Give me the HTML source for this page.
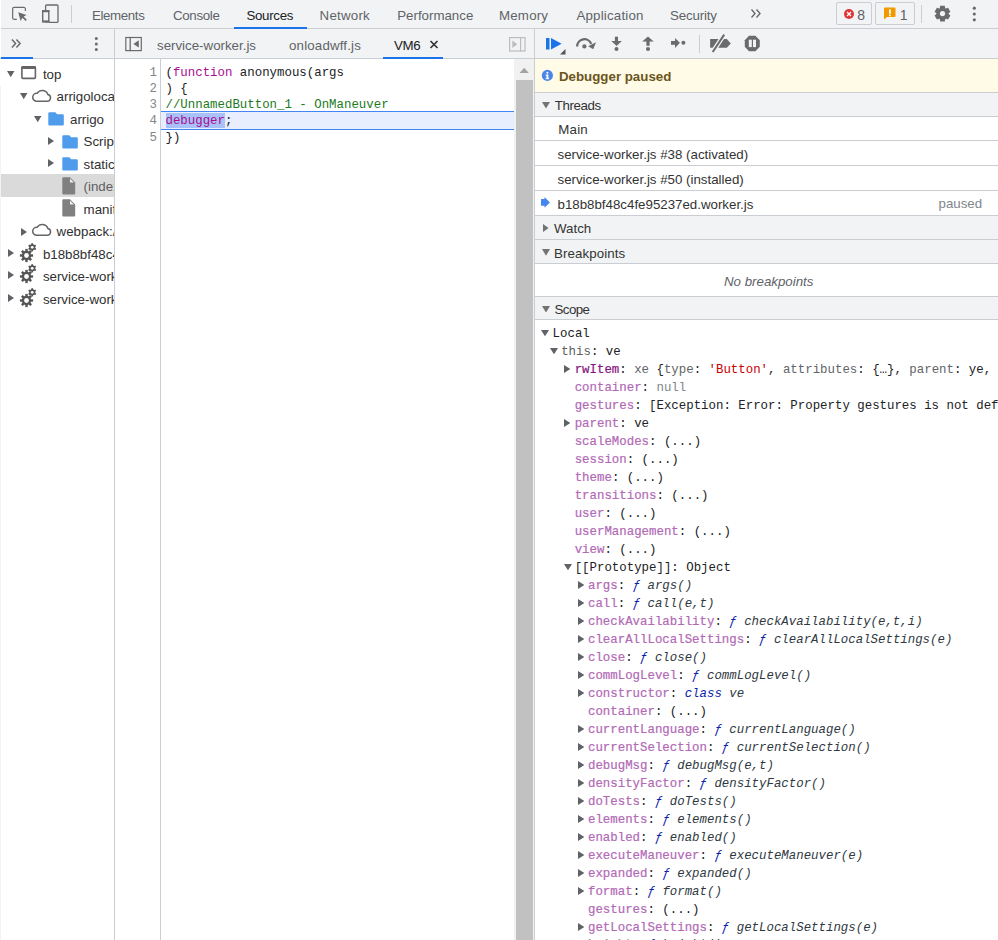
<!DOCTYPE html><html><head><meta charset="utf-8"><style>html,body{margin:0;padding:0;}body{width:998px;height:940px;overflow:hidden;position:relative;background:#fff;}.t{position:absolute;white-space:pre;line-height:normal;}.r{position:absolute;display:block;}</style></head><body>
<div class="r" style="left:0px;top:0px;width:998px;height:28px;background:#f1f3f4;"></div>
<div class="r" style="left:0px;top:28px;width:998px;height:1px;background:#cacdd1;"></div>
<svg class="r" style="left:8px;top:2px;" width="24" height="24" viewBox="0 0 24 24"><path d="M8.8 17.35H6.15a1.5 1.5 0 0 1-1.5-1.5V6.9a1.5 1.5 0 0 1 1.5-1.5H15.9a1.5 1.5 0 0 1 1.5 1.5V8.9" fill="none" stroke="#6b6b6b" stroke-width="1.2"/><path d="M10.2 10.2L18.6 13L15.6 14.6L18.8 17.8L17.6 19L14.4 15.8L12.6 18.9Z" fill="#6b6b6b"/></svg>
<svg class="r" style="left:38px;top:2px;" width="24" height="24" viewBox="0 0 24 24"><rect x="7.6" y="3" width="12.4" height="17.4" rx="1" fill="none" stroke="#6b6b6b" stroke-width="1.3"/><rect x="4.1" y="8.2" width="7.3" height="12.2" rx="1" fill="#f1f3f4"/><rect x="4.7" y="8.9" width="6.1" height="10.8" fill="none" stroke="#6b6b6b" stroke-width="1.4"/><rect x="4.1" y="8.2" width="7.3" height="2" fill="#6b6b6b"/><rect x="4.1" y="18.4" width="7.3" height="2" fill="#6b6b6b"/></svg>
<div class="r" style="left:71px;top:5px;width:1px;height:18px;background:#cacdd1;"></div>
<div class="t" style="left:92px;top:8px;font-family:'Liberation Sans', sans-serif;font-size:13.3px;color:#5f6368;font-weight:normal;font-style:normal;letter-spacing:-0.37px;">Elements</div>
<div class="t" style="left:173px;top:8px;font-family:'Liberation Sans', sans-serif;font-size:13.3px;color:#5f6368;font-weight:normal;font-style:normal;letter-spacing:-0.33px;">Console</div>
<div class="t" style="left:246.4px;top:8px;font-family:'Liberation Sans', sans-serif;font-size:13.3px;color:#202124;font-weight:normal;font-style:normal;letter-spacing:-0.3px;">Sources</div>
<div class="t" style="left:319.6px;top:8px;font-family:'Liberation Sans', sans-serif;font-size:13.3px;color:#5f6368;font-weight:normal;font-style:normal;letter-spacing:0.23px;">Network</div>
<div class="t" style="left:397.2px;top:8px;font-family:'Liberation Sans', sans-serif;font-size:13.3px;color:#5f6368;font-weight:normal;font-style:normal;letter-spacing:0px;">Performance</div>
<div class="t" style="left:499px;top:8px;font-family:'Liberation Sans', sans-serif;font-size:13.3px;color:#5f6368;font-weight:normal;font-style:normal;letter-spacing:0.2px;">Memory</div>
<div class="t" style="left:576.4px;top:8px;font-family:'Liberation Sans', sans-serif;font-size:13.3px;color:#5f6368;font-weight:normal;font-style:normal;letter-spacing:0.2px;">Application</div>
<div class="t" style="left:670px;top:8px;font-family:'Liberation Sans', sans-serif;font-size:13.3px;color:#5f6368;font-weight:normal;font-style:normal;letter-spacing:-0.16px;">Security</div>
<div class="r" style="left:234px;top:27px;width:73px;height:2px;background:#1a73e8;"></div>
<svg class="r" style="left:750px;top:8px;" width="12" height="11" viewBox="0 0 12 11"><path d="M1.5 1.5L5 5.5L1.5 9.5M6.5 1.5L10 5.5L6.5 9.5" fill="none" stroke="#6b6b6b" stroke-width="1.4"/></svg>
<div class="r" style="left:836px;top:2px;width:34px;height:21px;border:1px solid #cacdd1;border-radius:2px;background:#f1f3f4"></div>
<svg class="r" style="left:843px;top:8px;" width="12" height="12" viewBox="0 0 12 12"><circle cx="6" cy="6" r="5" fill="#e03535"/><path d="M4 4L8 8M8 4L4 8" stroke="#fff" stroke-width="1.3"/></svg>
<div class="t" style="left:857.3px;top:7.300000000000001px;font-family:'Liberation Sans', sans-serif;font-size:14px;color:#5f6368;font-weight:normal;font-style:normal;">8</div>
<div class="r" style="left:875px;top:2px;width:38px;height:21px;border:1px solid #cacdd1;border-radius:2px;background:#f1f3f4"></div>
<svg class="r" style="left:883px;top:7px;" width="13" height="13" viewBox="0 0 13 13"><path d="M1 1.5a1 1 0 0 1 1-1H11.5a1 1 0 0 1 1 1V9a1 1 0 0 1-1 1H4L1 12.5Z" fill="#f29900"/><rect x="6" y="2.4" width="1.8" height="4.4" fill="#fff"/><rect x="6" y="7.6" width="1.8" height="1.6" fill="#fff"/></svg>
<div class="t" style="left:899.8px;top:7.300000000000001px;font-family:'Liberation Sans', sans-serif;font-size:14px;color:#5f6368;font-weight:normal;font-style:normal;">1</div>
<div class="r" style="left:921px;top:5px;width:1px;height:18px;background:#cacdd1;"></div>
<svg class="r" style="left:933px;top:4px;" width="19" height="19" viewBox="0 0 19 19"><g transform="translate(9.5,9.6)" fill="#6b6b6b"><path d="M-2.3 -7.8H2.3L3 -4H-3Z" transform="rotate(0)"/><path d="M-2.3 -7.8H2.3L3 -4H-3Z" transform="rotate(60)"/><path d="M-2.3 -7.8H2.3L3 -4H-3Z" transform="rotate(120)"/><path d="M-2.3 -7.8H2.3L3 -4H-3Z" transform="rotate(180)"/><path d="M-2.3 -7.8H2.3L3 -4H-3Z" transform="rotate(240)"/><path d="M-2.3 -7.8H2.3L3 -4H-3Z" transform="rotate(300)"/><circle r="5.9"/><circle r="2.6" fill="#f1f3f4"/></g></svg>
<svg class="r" style="left:971px;top:5px;" width="6" height="18" viewBox="0 0 6 18"><circle cx="3.3" cy="3.2" r="1.6" fill="#6b6b6b"/><circle cx="3.3" cy="9" r="1.6" fill="#6b6b6b"/><circle cx="3.3" cy="14.8" r="1.6" fill="#6b6b6b"/></svg>
<div class="r" style="left:0px;top:29px;width:998px;height:29px;background:#f1f3f4;"></div>
<div class="r" style="left:0px;top:58px;width:998px;height:1px;background:#cacdd1;"></div>
<div class="r" style="left:0px;top:0px;width:1px;height:58px;background:#ffffff;"></div>
<div class="r" style="left:114px;top:29px;width:1px;height:911px;background:#cacdd1;"></div>
<div class="r" style="left:534px;top:29px;width:1px;height:911px;background:#cacdd1;"></div>
<svg class="r" style="left:10px;top:38px;" width="12" height="11" viewBox="0 0 12 11"><path d="M1.9 1.4L5.6 5.45L1.9 9.5M6.4 1.4L10.1 5.45L6.4 9.5" fill="none" stroke="#6b6b6b" stroke-width="1.5"/></svg>
<svg class="r" style="left:93px;top:36px;" width="6" height="16" viewBox="0 0 6 16"><circle cx="3.3" cy="2.5" r="1.5" fill="#6b6b6b"/><circle cx="3.3" cy="8" r="1.5" fill="#6b6b6b"/><circle cx="3.3" cy="13.5" r="1.5" fill="#6b6b6b"/></svg>
<div class="r" style="left:1px;top:57px;width:32px;height:2px;background:#1a73e8;"></div>
<svg class="r" style="left:124px;top:36px;" width="20" height="17" viewBox="0 0 20 17"><rect x="1.8" y="1.5" width="15.5" height="13.1" fill="none" stroke="#6b6b6b" stroke-width="1.2"/><rect x="5.55" y="0.9" width="1.3" height="14.3" fill="#6b6b6b"/><path d="M14.8 4.3L9.4 7.9L14.8 11.5Z" fill="#6b6b6b"/></svg>
<div class="t" style="left:157px;top:38px;font-family:'Liberation Sans', sans-serif;font-size:13.3px;color:#5f6368;font-weight:normal;font-style:normal;">service-worker.js</div>
<div class="t" style="left:289px;top:38px;font-family:'Liberation Sans', sans-serif;font-size:13.3px;color:#5f6368;font-weight:normal;font-style:normal;letter-spacing:0.17px;">onloadwff.js</div>
<div class="t" style="left:394px;top:38px;font-family:'Liberation Sans', sans-serif;font-size:13.3px;color:#202124;font-weight:normal;font-style:normal;letter-spacing:-0.3px;">VM6</div>
<svg class="r" style="left:429px;top:40px;" width="10" height="9" viewBox="0 0 10 9"><path d="M1.5 1L8.5 8M8.5 1L1.5 8" stroke="#333" stroke-width="1.7"/></svg>
<div class="r" style="left:383px;top:57px;width:60px;height:2px;background:#1a73e8;"></div>
<svg class="r" style="left:508px;top:36px;" width="19" height="17" viewBox="0 0 19 17"><rect x="1.6" y="1.6" width="15.4" height="13.4" fill="none" stroke="#bdbdbd" stroke-width="1.2"/><rect x="12" y="1" width="1.2" height="14.6" fill="#bdbdbd"/><path d="M4.3 4.6L9.4 8.3L4.3 12Z" fill="#bdbdbd"/></svg>
<svg class="r" style="left:544px;top:36px;" width="24" height="20" viewBox="0 0 24 20"><rect x="2" y="2" width="3.5" height="11.5" fill="#1a73e8"/><path d="M7 2L17.6 7.75L7 13.5Z" fill="#1a73e8"/><path d="M21.5 13V18.6H16Z" fill="#555"/></svg>
<svg class="r" style="left:570px;top:30px;" width="30" height="26" viewBox="0 0 30 26"><path d="M7.1 16.6A7.3 7.3 0 0 1 21.2 13.9" fill="none" stroke="#6b6b6b" stroke-width="2.3"/><path d="M18.2 16.2L26 12.3L23.2 19.2Z" fill="#6b6b6b"/><circle cx="14.4" cy="16.4" r="2.1" fill="#6b6b6b"/></svg>
<svg class="r" style="left:604px;top:30px;" width="56" height="26" viewBox="0 0 56 26"><g fill="#6b6b6b"><rect x="10.9" y="6.7" width="3.1" height="5"/><path d="M7.3 11H17.9L12.6 15.9Z"/><circle cx="12.5" cy="19.1" r="2"/><path d="M38.2 11.5H49.7L44 6.5Z"/><rect x="42.4" y="11" width="3.2" height="4.8"/><circle cx="44" cy="19.1" r="2"/></g></svg>
<svg class="r" style="left:664px;top:34px;" width="28" height="20" viewBox="0 0 28 20"><g fill="#6b6b6b"><rect x="7" y="7" width="4.4" height="3.8"/><path d="M11 4.1L15.9 8.85L11 13.9Z"/><circle cx="19.4" cy="8.75" r="2"/></g></svg>
<div class="r" style="left:699px;top:35px;width:1px;height:18px;background:#cacdd1;"></div>
<svg class="r" style="left:708px;top:33px;" width="24" height="21" viewBox="0 0 24 21"><path d="M2.1 6.1H18.8L22.8 10.45L18.8 14.8H2.1Z" fill="#6b6b6b"/><path d="M4.7 19L16.2 1.6" stroke="#f1f3f4" stroke-width="4.6"/><path d="M4.7 19L16.2 1.6" stroke="#6b6b6b" stroke-width="2"/></svg>
<svg class="r" style="left:744px;top:35px;" width="17" height="17" viewBox="0 0 17 17"><path d="M5 0.8H11.4L15.8 5.2V11.8L11.4 16.2H5L0.8 11.8V5.2Z" fill="#6b6b6b"/><rect x="4.8" y="4.7" width="3" height="7.4" fill="#f1f3f4"/><rect x="9" y="4.7" width="3" height="7.4" fill="#f1f3f4"/></svg>
<div style="position:absolute;left:0;top:0;width:998px;height:940px;clip-path:inset(59px 884px 0 0)">
<div class="r" style="left:0px;top:59px;width:1px;height:27px;background:#ffffff;"></div>
<div class="r" style="left:0px;top:86px;width:1px;height:854px;background:#f3f3f3;"></div>
<div class="r" style="left:1px;top:174px;width:113px;height:23px;background:#dadada;"></div>
<svg class="r" style="left:7px;top:70.5px;" width="7.5" height="6.2" viewBox="0 0 7.5 6.2"><path d="M0 0H7.5L3.75 6.2Z" fill="#5f6368"/></svg>
<svg class="r" style="left:21px;top:65.5px;" width="16" height="14" viewBox="0 0 16 14"><rect x="0.9" y="0.9" width="13.5" height="11.5" rx="1" fill="none" stroke="#666" stroke-width="1.6"/><rect x="0.3" y="0.3" width="14.7" height="2.8" rx="0.8" fill="#666"/></svg>
<div class="t" style="left:42.9px;top:67px;font-family:'Liberation Sans', sans-serif;font-size:13.3px;color:#303030;font-weight:normal;font-style:normal;">top</div>
<svg class="r" style="left:20.3px;top:93px;" width="7.5" height="6.2" viewBox="0 0 7.5 6.2"><path d="M0 0H7.5L3.75 6.2Z" fill="#5f6368"/></svg>
<svg class="r" style="left:31px;top:88px;" width="21" height="15" viewBox="0 0 21 15"><path d="M5.3 13.35H16.2A3.45 3.45 0 0 0 16.9 6.55A5.9 5.9 0 0 0 6.3 5.2A4.1 4.1 0 0 0 5.3 13.35Z" fill="none" stroke="#666" stroke-width="1.5"/></svg>
<div class="t" style="left:56.6px;top:89px;font-family:'Liberation Sans', sans-serif;font-size:13.3px;color:#303030;font-weight:normal;font-style:normal;">arrigolocal</div>
<svg class="r" style="left:34px;top:115.5px;" width="7.5" height="6.2" viewBox="0 0 7.5 6.2"><path d="M0 0H7.5L3.75 6.2Z" fill="#5f6368"/></svg>
<svg class="r" style="left:47.7px;top:111.8px;" width="17" height="14" viewBox="0 0 17 14"><path d="M0.3 1.3A1 1 0 0 1 1.3 0.3H7.3L9.1 2.3H14.8A1 1 0 0 1 15.8 3.3V12.6A1 1 0 0 1 14.8 13.6H1.3A1 1 0 0 1 0.3 12.6Z" fill="#4f9cec"/></svg>
<div class="t" style="left:70px;top:112px;font-family:'Liberation Sans', sans-serif;font-size:13.3px;color:#303030;font-weight:normal;font-style:normal;">arrigo</div>
<svg class="r" style="left:48px;top:136.5px;" width="6.2" height="8" viewBox="0 0 6.2 8"><path d="M0 0L6.2 4.0L0 8Z" fill="#5f6368"/></svg>
<svg class="r" style="left:61.6px;top:134.6px;" width="17" height="14" viewBox="0 0 17 14"><path d="M0.3 1.3A1 1 0 0 1 1.3 0.3H7.3L9.1 2.3H14.8A1 1 0 0 1 15.8 3.3V12.6A1 1 0 0 1 14.8 13.6H1.3A1 1 0 0 1 0.3 12.6Z" fill="#4f9cec"/></svg>
<div class="t" style="left:83.6px;top:133.9px;font-family:'Liberation Sans', sans-serif;font-size:13.3px;color:#303030;font-weight:normal;font-style:normal;">Scripts</div>
<svg class="r" style="left:48px;top:159px;" width="6.2" height="8" viewBox="0 0 6.2 8"><path d="M0 0L6.2 4.0L0 8Z" fill="#5f6368"/></svg>
<svg class="r" style="left:61.6px;top:157.1px;" width="17" height="14" viewBox="0 0 17 14"><path d="M0.3 1.3A1 1 0 0 1 1.3 0.3H7.3L9.1 2.3H14.8A1 1 0 0 1 15.8 3.3V12.6A1 1 0 0 1 14.8 13.6H1.3A1 1 0 0 1 0.3 12.6Z" fill="#4f9cec"/></svg>
<div class="t" style="left:83.6px;top:157px;font-family:'Liberation Sans', sans-serif;font-size:13.3px;color:#303030;font-weight:normal;font-style:normal;">static</div>
<svg class="r" style="left:61.7px;top:176.5px;" width="14" height="18" viewBox="0 0 14 18"><path d="M0.3 1.3A1 1 0 0 1 1.3 0.3H8L13.2 5.5V16.5A1 1 0 0 1 12.2 17.5H1.3A1 1 0 0 1 0.3 16.5Z" fill="#808080"/><path d="M8 1.6L11.9 5.5H8Z" fill="#f0f0f0"/></svg>
<div class="t" style="left:83.6px;top:179px;font-family:'Liberation Sans', sans-serif;font-size:13.3px;color:#606060;font-weight:normal;font-style:normal;">(index)</div>
<svg class="r" style="left:61.7px;top:198.7px;" width="14" height="18" viewBox="0 0 14 18"><path d="M0.3 1.3A1 1 0 0 1 1.3 0.3H8L13.2 5.5V16.5A1 1 0 0 1 12.2 17.5H1.3A1 1 0 0 1 0.3 16.5Z" fill="#808080"/><path d="M8 1.6L11.9 5.5H8Z" fill="#f0f0f0"/></svg>
<div class="t" style="left:83.6px;top:202px;font-family:'Liberation Sans', sans-serif;font-size:13.3px;color:#303030;font-weight:normal;font-style:normal;">manifest.json</div>
<svg class="r" style="left:20.5px;top:227.5px;" width="6.2" height="8" viewBox="0 0 6.2 8"><path d="M0 0L6.2 4.0L0 8Z" fill="#5f6368"/></svg>
<svg class="r" style="left:31px;top:221.5px;" width="21" height="15" viewBox="0 0 21 15"><path d="M5.3 13.35H16.2A3.45 3.45 0 0 0 16.9 6.55A5.9 5.9 0 0 0 6.3 5.2A4.1 4.1 0 0 0 5.3 13.35Z" fill="none" stroke="#666" stroke-width="1.5"/></svg>
<div class="t" style="left:56.6px;top:223.7px;font-family:'Liberation Sans', sans-serif;font-size:13.3px;color:#303030;font-weight:normal;font-style:normal;">webpack://</div>
<svg class="r" style="left:8px;top:249px;" width="6" height="8" viewBox="0 0 6 8"><path d="M0 0L6 4.0L0 8Z" fill="#5f6368"/></svg>
<svg class="r" style="left:18.8px;top:242.5px;" width="22" height="20" viewBox="0 0 22 20"><g fill="#555"><g transform="translate(7.5,12.5)"><rect x="-1.2" y="-6.6" width="2.4" height="3" transform="rotate(0)"/><rect x="-1.2" y="-6.6" width="2.4" height="3" transform="rotate(45)"/><rect x="-1.2" y="-6.6" width="2.4" height="3" transform="rotate(90)"/><rect x="-1.2" y="-6.6" width="2.4" height="3" transform="rotate(135)"/><rect x="-1.2" y="-6.6" width="2.4" height="3" transform="rotate(180)"/><rect x="-1.2" y="-6.6" width="2.4" height="3" transform="rotate(225)"/><rect x="-1.2" y="-6.6" width="2.4" height="3" transform="rotate(270)"/><rect x="-1.2" y="-6.6" width="2.4" height="3" transform="rotate(315)"/><circle r="4.7"/><circle r="2.4" fill="#fff"/></g><g transform="translate(13.2,4.3)"><rect x="-0.9" y="-4.1" width="1.8" height="2.2" transform="rotate(0)"/><rect x="-0.9" y="-4.1" width="1.8" height="2.2" transform="rotate(60)"/><rect x="-0.9" y="-4.1" width="1.8" height="2.2" transform="rotate(120)"/><rect x="-0.9" y="-4.1" width="1.8" height="2.2" transform="rotate(180)"/><rect x="-0.9" y="-4.1" width="1.8" height="2.2" transform="rotate(240)"/><rect x="-0.9" y="-4.1" width="1.8" height="2.2" transform="rotate(300)"/><circle r="3"/><circle r="1.4" fill="#fff"/></g></g></svg>
<div class="t" style="left:42.9px;top:247px;font-family:'Liberation Sans', sans-serif;font-size:13.3px;color:#303030;font-weight:normal;font-style:normal;">b18b8bf48c4fe95237ed.worker.js</div>
<svg class="r" style="left:8px;top:270.8px;" width="6" height="8" viewBox="0 0 6 8"><path d="M0 0L6 4.0L0 8Z" fill="#5f6368"/></svg>
<svg class="r" style="left:18.8px;top:264.3px;" width="22" height="20" viewBox="0 0 22 20"><g fill="#555"><g transform="translate(7.5,12.5)"><rect x="-1.2" y="-6.6" width="2.4" height="3" transform="rotate(0)"/><rect x="-1.2" y="-6.6" width="2.4" height="3" transform="rotate(45)"/><rect x="-1.2" y="-6.6" width="2.4" height="3" transform="rotate(90)"/><rect x="-1.2" y="-6.6" width="2.4" height="3" transform="rotate(135)"/><rect x="-1.2" y="-6.6" width="2.4" height="3" transform="rotate(180)"/><rect x="-1.2" y="-6.6" width="2.4" height="3" transform="rotate(225)"/><rect x="-1.2" y="-6.6" width="2.4" height="3" transform="rotate(270)"/><rect x="-1.2" y="-6.6" width="2.4" height="3" transform="rotate(315)"/><circle r="4.7"/><circle r="2.4" fill="#fff"/></g><g transform="translate(13.2,4.3)"><rect x="-0.9" y="-4.1" width="1.8" height="2.2" transform="rotate(0)"/><rect x="-0.9" y="-4.1" width="1.8" height="2.2" transform="rotate(60)"/><rect x="-0.9" y="-4.1" width="1.8" height="2.2" transform="rotate(120)"/><rect x="-0.9" y="-4.1" width="1.8" height="2.2" transform="rotate(180)"/><rect x="-0.9" y="-4.1" width="1.8" height="2.2" transform="rotate(240)"/><rect x="-0.9" y="-4.1" width="1.8" height="2.2" transform="rotate(300)"/><circle r="3"/><circle r="1.4" fill="#fff"/></g></g></svg>
<div class="t" style="left:42.9px;top:268.8px;font-family:'Liberation Sans', sans-serif;font-size:13.3px;color:#303030;font-weight:normal;font-style:normal;">service-worker.js</div>
<svg class="r" style="left:8px;top:294px;" width="6" height="8" viewBox="0 0 6 8"><path d="M0 0L6 4.0L0 8Z" fill="#5f6368"/></svg>
<svg class="r" style="left:18.8px;top:287.5px;" width="22" height="20" viewBox="0 0 22 20"><g fill="#555"><g transform="translate(7.5,12.5)"><rect x="-1.2" y="-6.6" width="2.4" height="3" transform="rotate(0)"/><rect x="-1.2" y="-6.6" width="2.4" height="3" transform="rotate(45)"/><rect x="-1.2" y="-6.6" width="2.4" height="3" transform="rotate(90)"/><rect x="-1.2" y="-6.6" width="2.4" height="3" transform="rotate(135)"/><rect x="-1.2" y="-6.6" width="2.4" height="3" transform="rotate(180)"/><rect x="-1.2" y="-6.6" width="2.4" height="3" transform="rotate(225)"/><rect x="-1.2" y="-6.6" width="2.4" height="3" transform="rotate(270)"/><rect x="-1.2" y="-6.6" width="2.4" height="3" transform="rotate(315)"/><circle r="4.7"/><circle r="2.4" fill="#fff"/></g><g transform="translate(13.2,4.3)"><rect x="-0.9" y="-4.1" width="1.8" height="2.2" transform="rotate(0)"/><rect x="-0.9" y="-4.1" width="1.8" height="2.2" transform="rotate(60)"/><rect x="-0.9" y="-4.1" width="1.8" height="2.2" transform="rotate(120)"/><rect x="-0.9" y="-4.1" width="1.8" height="2.2" transform="rotate(180)"/><rect x="-0.9" y="-4.1" width="1.8" height="2.2" transform="rotate(240)"/><rect x="-0.9" y="-4.1" width="1.8" height="2.2" transform="rotate(300)"/><circle r="3"/><circle r="1.4" fill="#fff"/></g></g></svg>
<div class="t" style="left:42.9px;top:292px;font-family:'Liberation Sans', sans-serif;font-size:13.3px;color:#303030;font-weight:normal;font-style:normal;">service-worker.js</div>
</div>
<div class="r" style="left:160px;top:59px;width:1px;height:881px;background:#cacdd1;"></div>
<div class="t" style="left:149.5px;top:65.5px;font-family:'Liberation Mono', monospace;font-size:12.4px;color:#80868b;font-weight:normal;font-style:normal;">1</div>
<div class="t" style="left:149.5px;top:81.5px;font-family:'Liberation Mono', monospace;font-size:12.4px;color:#80868b;font-weight:normal;font-style:normal;">2</div>
<div class="t" style="left:149.5px;top:97.5px;font-family:'Liberation Mono', monospace;font-size:12.4px;color:#80868b;font-weight:normal;font-style:normal;">3</div>
<div class="t" style="left:149.5px;top:114px;font-family:'Liberation Mono', monospace;font-size:12.4px;color:#80868b;font-weight:normal;font-style:normal;">4</div>
<div class="t" style="left:149.5px;top:130.5px;font-family:'Liberation Mono', monospace;font-size:12.4px;color:#80868b;font-weight:normal;font-style:normal;">5</div>
<div class="r" style="left:161px;top:111px;width:353px;height:1px;background:#4285f4;"></div>
<div class="r" style="left:161px;top:112px;width:353px;height:17px;background:#e8eefd;"></div>
<div class="r" style="left:161px;top:129px;width:353px;height:1px;background:#4285f4;"></div>
<div class="r" style="left:165.5px;top:113px;width:59px;height:15px;background:#a8c1f7;"></div>
<div class="t" style="left:165.5px;top:65.5px;font-family:'Liberation Mono', monospace;font-size:12.4px;color:#202124;font-weight:normal;font-style:normal;"><span style="color:#202124">(</span><span style="color:#aa0d91">function</span><span style="color:#202124"> anonymous(args</span></div>
<div class="t" style="left:165.5px;top:81.5px;font-family:'Liberation Mono', monospace;font-size:12.4px;color:#202124;font-weight:normal;font-style:normal;">) {</div>
<div class="t" style="left:165.5px;top:97.5px;font-family:'Liberation Mono', monospace;font-size:12.4px;color:#1b7a1d;font-weight:normal;font-style:normal;">//UnnamedButton_1 - OnManeuver</div>
<div class="t" style="left:165.5px;top:114px;font-family:'Liberation Mono', monospace;font-size:12.4px;color:#202124;font-weight:normal;font-style:normal;"><span style="color:#aa0d91">debugger</span><span style="color:#202124">;</span></div>
<div class="t" style="left:165.5px;top:130.5px;font-family:'Liberation Mono', monospace;font-size:12.4px;color:#202124;font-weight:normal;font-style:normal;">})</div>
<div class="r" style="left:514px;top:59px;width:20px;height:881px;background:#f1f1f1;"></div>
<svg class="r" style="left:514px;top:59px;" width="20" height="20" viewBox="0 0 20 20"><path d="M5.6 14H14.8L10.2 8.8Z" fill="#a3a3a3"/></svg>
<div class="r" style="left:516px;top:80px;width:17px;height:860px;background:#c1c1c1;"></div>
<div class="r" style="left:535px;top:59px;width:463px;height:33px;background:#fffbe6;"></div>
<div class="r" style="left:535px;top:92px;width:463px;height:1px;background:#cacdd1;"></div>
<svg class="r" style="left:541px;top:69.3px;" width="13" height="13" viewBox="0 0 13 13"><circle cx="6.4" cy="6.4" r="5.6" fill="#4a86e8"/><rect x="5.5" y="5.6" width="1.9" height="4.4" fill="#fff"/><rect x="4.6" y="9.2" width="3.6" height="1" fill="#fff"/><rect x="4.6" y="5.6" width="2" height="1" fill="#fff"/><circle cx="6.4" cy="3.7" r="1.05" fill="#fff"/></svg>
<div class="t" style="left:559px;top:69px;font-family:'Liberation Sans', sans-serif;font-size:13.3px;color:#6b5420;font-weight:bold;font-style:normal;">Debugger paused</div>
<div class="r" style="left:535px;top:93px;width:463px;height:23px;background:#f1f3f4;"></div>
<div class="r" style="left:535px;top:116px;width:463px;height:1px;background:#cacdd1;"></div>
<svg class="r" style="left:542px;top:102.2px;" width="8" height="6.6" viewBox="0 0 8 6.6"><path d="M0 0H8L4.0 6.6Z" fill="#737373"/></svg>
<div class="t" style="left:554.8px;top:98px;font-family:'Liberation Sans', sans-serif;font-size:13.3px;color:#333333;font-weight:normal;font-style:normal;letter-spacing:-0.4px;">Threads</div>
<div class="t" style="left:558.3px;top:122px;font-family:'Liberation Sans', sans-serif;font-size:13.3px;color:#333333;font-weight:normal;font-style:normal;letter-spacing:0.2px;">Main</div>
<div class="r" style="left:535px;top:140px;width:463px;height:1px;background:#cacdd1;"></div>
<div class="t" style="left:557.5px;top:147px;font-family:'Liberation Sans', sans-serif;font-size:13.3px;color:#333333;font-weight:normal;font-style:normal;">service-worker.js #38 (activated)</div>
<div class="r" style="left:535px;top:165px;width:463px;height:1px;background:#cacdd1;"></div>
<div class="t" style="left:557.5px;top:172px;font-family:'Liberation Sans', sans-serif;font-size:13.3px;color:#333333;font-weight:normal;font-style:normal;">service-worker.js #50 (installed)</div>
<div class="r" style="left:535px;top:190px;width:463px;height:1px;background:#cacdd1;"></div>
<svg class="r" style="left:536px;top:192px;" width="20" height="20" viewBox="0 0 20 20"><path d="M5 7.1H8.5V5.1L13.9 10.4L8.5 15.8V13.7H5Z" fill="#4587ee"/></svg>
<div class="t" style="left:557.5px;top:196.5px;font-family:'Liberation Sans', sans-serif;font-size:13.3px;color:#333333;font-weight:normal;font-style:normal;">b18b8bf48c4fe95237ed.worker.js</div>
<div class="t" style="left:938.5px;top:196.4px;font-family:'Liberation Sans', sans-serif;font-size:13.3px;color:#80868b;font-weight:normal;font-style:normal;">paused</div>
<div class="r" style="left:535px;top:215px;width:463px;height:24px;background:#f1f3f4;"></div>
<div class="r" style="left:535px;top:239px;width:463px;height:1px;background:#cacdd1;"></div>
<div class="r" style="left:535px;top:215px;width:463px;height:1px;background:#cacdd1;"></div>
<svg class="r" style="left:543px;top:223.9px;" width="5.6" height="8.1" viewBox="0 0 5.6 8.1"><path d="M0 0L5.6 4.05L0 8.1Z" fill="#737373"/></svg>
<div class="t" style="left:554px;top:221px;font-family:'Liberation Sans', sans-serif;font-size:13.3px;color:#333333;font-weight:normal;font-style:normal;">Watch</div>
<div class="r" style="left:535px;top:240px;width:463px;height:23px;background:#f1f3f4;"></div>
<div class="r" style="left:535px;top:263px;width:463px;height:1px;background:#cacdd1;"></div>
<svg class="r" style="left:542px;top:249.1px;" width="8" height="6.7" viewBox="0 0 8 6.7"><path d="M0 0H8L4.0 6.7Z" fill="#737373"/></svg>
<div class="t" style="left:554px;top:245.8px;font-family:'Liberation Sans', sans-serif;font-size:13.3px;color:#333333;font-weight:normal;font-style:normal;letter-spacing:0.1px;">Breakpoints</div>
<div class="t" style="left:724px;top:274px;font-family:'Liberation Sans', sans-serif;font-size:13.3px;color:#5f6368;font-weight:normal;font-style:italic;">No breakpoints</div>
<div class="r" style="left:535px;top:297px;width:463px;height:22px;background:#f1f3f4;"></div>
<div class="r" style="left:535px;top:319px;width:463px;height:1px;background:#cacdd1;"></div>
<div class="r" style="left:535px;top:296px;width:463px;height:1px;background:#cacdd1;"></div>
<svg class="r" style="left:542px;top:305.8px;" width="8" height="6.6" viewBox="0 0 8 6.6"><path d="M0 0H8L4.0 6.6Z" fill="#737373"/></svg>
<div class="t" style="left:554.6px;top:301.8px;font-family:'Liberation Sans', sans-serif;font-size:13.3px;color:#333333;font-weight:normal;font-style:normal;letter-spacing:-0.6px;">Scope</div>
<svg class="r" style="left:541px;top:330.2px;" width="8" height="6.3" viewBox="0 0 8 6.3"><path d="M0 0H8L4.0 6.3Z" fill="#5f6368"/></svg>
<div class="t" style="left:552.6px;top:327px;font-family:'Liberation Mono', monospace;font-size:12.4px;color:#202124;font-weight:normal;font-style:normal;"><span style="color:#202124;">Local</span></div>
<svg class="r" style="left:550px;top:348.2px;" width="8" height="6.3" viewBox="0 0 8 6.3"><path d="M0 0H8L4.0 6.3Z" fill="#5f6368"/></svg>
<div class="t" style="left:561.2px;top:345px;font-family:'Liberation Mono', monospace;font-size:12.4px;color:#202124;font-weight:normal;font-style:normal;"><span style="color:#5e5e5e;">this</span><span style="color:#202124;">: </span><span style="color:#202124;">ve</span></div>
<svg class="r" style="left:564px;top:365px;" width="6.4" height="8" viewBox="0 0 6.4 8"><path d="M0 0L6.4 4.0L0 8Z" fill="#5f6368"/></svg>
<div class="t" style="left:574.7px;top:363px;font-family:'Liberation Mono', monospace;font-size:12.4px;color:#202124;font-weight:normal;font-style:normal;"><span style="color:#881280;-webkit-text-stroke:0.2px currentColor;">rwItem</span><span style="color:#202124;">: </span><span style="color:#616468;">xe </span><span style="color:#202124;">{</span><span style="color:#616468;">type</span><span style="color:#202124;">: </span><span style="color:#c80000;">&#x27;Button&#x27;</span><span style="color:#202124;">, </span><span style="color:#616468;">attributes</span><span style="color:#202124;">: {…}, </span><span style="color:#616468;">parent</span><span style="color:#202124;">: ye, </span></div>
<div class="t" style="left:574.7px;top:381px;font-family:'Liberation Mono', monospace;font-size:12.4px;color:#202124;font-weight:normal;font-style:normal;"><span style="color:#b269b6;-webkit-text-stroke:0.2px currentColor;">container</span><span style="color:#202124;">: </span><span style="color:#80868b;">null</span></div>
<div class="t" style="left:574.7px;top:399px;font-family:'Liberation Mono', monospace;font-size:12.4px;color:#202124;font-weight:normal;font-style:normal;"><span style="color:#b269b6;-webkit-text-stroke:0.2px currentColor;">gestures</span><span style="color:#202124;">: [Exception: Error: Property gestures is not defined]</span></div>
<svg class="r" style="left:564px;top:419px;" width="6.4" height="8" viewBox="0 0 6.4 8"><path d="M0 0L6.4 4.0L0 8Z" fill="#5f6368"/></svg>
<div class="t" style="left:574.7px;top:417px;font-family:'Liberation Mono', monospace;font-size:12.4px;color:#202124;font-weight:normal;font-style:normal;"><span style="color:#b269b6;-webkit-text-stroke:0.2px currentColor;">parent</span><span style="color:#202124;">: </span><span style="color:#202124;">ve</span></div>
<div class="t" style="left:574.7px;top:435px;font-family:'Liberation Mono', monospace;font-size:12.4px;color:#202124;font-weight:normal;font-style:normal;"><span style="color:#b269b6;-webkit-text-stroke:0.2px currentColor;">scaleModes</span><span style="color:#202124;">: (...)</span></div>
<div class="t" style="left:574.7px;top:453px;font-family:'Liberation Mono', monospace;font-size:12.4px;color:#202124;font-weight:normal;font-style:normal;"><span style="color:#b269b6;-webkit-text-stroke:0.2px currentColor;">session</span><span style="color:#202124;">: (...)</span></div>
<div class="t" style="left:574.7px;top:471px;font-family:'Liberation Mono', monospace;font-size:12.4px;color:#202124;font-weight:normal;font-style:normal;"><span style="color:#b269b6;-webkit-text-stroke:0.2px currentColor;">theme</span><span style="color:#202124;">: (...)</span></div>
<div class="t" style="left:574.7px;top:489px;font-family:'Liberation Mono', monospace;font-size:12.4px;color:#202124;font-weight:normal;font-style:normal;"><span style="color:#b269b6;-webkit-text-stroke:0.2px currentColor;">transitions</span><span style="color:#202124;">: (...)</span></div>
<div class="t" style="left:574.7px;top:507px;font-family:'Liberation Mono', monospace;font-size:12.4px;color:#202124;font-weight:normal;font-style:normal;"><span style="color:#b269b6;-webkit-text-stroke:0.2px currentColor;">user</span><span style="color:#202124;">: (...)</span></div>
<div class="t" style="left:574.7px;top:525px;font-family:'Liberation Mono', monospace;font-size:12.4px;color:#202124;font-weight:normal;font-style:normal;"><span style="color:#b269b6;-webkit-text-stroke:0.2px currentColor;">userManagement</span><span style="color:#202124;">: (...)</span></div>
<div class="t" style="left:574.7px;top:543px;font-family:'Liberation Mono', monospace;font-size:12.4px;color:#202124;font-weight:normal;font-style:normal;"><span style="color:#b269b6;-webkit-text-stroke:0.2px currentColor;">view</span><span style="color:#202124;">: (...)</span></div>
<svg class="r" style="left:564px;top:564.2px;" width="8" height="6.3" viewBox="0 0 8 6.3"><path d="M0 0H8L4.0 6.3Z" fill="#5f6368"/></svg>
<div class="t" style="left:574.7px;top:561px;font-family:'Liberation Mono', monospace;font-size:12.4px;color:#202124;font-weight:normal;font-style:normal;"><span style="color:#202124;">[[Prototype]]</span><span style="color:#202124;">: Object</span></div>
<svg class="r" style="left:578px;top:581px;" width="6.4" height="8" viewBox="0 0 6.4 8"><path d="M0 0L6.4 4.0L0 8Z" fill="#5f6368"/></svg>
<div class="t" style="left:588px;top:579px;font-family:'Liberation Mono', monospace;font-size:12.4px;color:#202124;font-weight:normal;font-style:normal;"><span style="color:#b269b6;-webkit-text-stroke:0.2px currentColor;">args</span><span style="color:#202124;">: </span><span style="color:#0d22aa;font-style:italic;">ƒ </span><span style="color:#303942;font-style:italic;">args()</span></div>
<svg class="r" style="left:578px;top:599px;" width="6.4" height="8" viewBox="0 0 6.4 8"><path d="M0 0L6.4 4.0L0 8Z" fill="#5f6368"/></svg>
<div class="t" style="left:588px;top:597px;font-family:'Liberation Mono', monospace;font-size:12.4px;color:#202124;font-weight:normal;font-style:normal;"><span style="color:#b269b6;-webkit-text-stroke:0.2px currentColor;">call</span><span style="color:#202124;">: </span><span style="color:#0d22aa;font-style:italic;">ƒ </span><span style="color:#303942;font-style:italic;">call(e,t)</span></div>
<svg class="r" style="left:578px;top:617px;" width="6.4" height="8" viewBox="0 0 6.4 8"><path d="M0 0L6.4 4.0L0 8Z" fill="#5f6368"/></svg>
<div class="t" style="left:588px;top:615px;font-family:'Liberation Mono', monospace;font-size:12.4px;color:#202124;font-weight:normal;font-style:normal;"><span style="color:#b269b6;-webkit-text-stroke:0.2px currentColor;">checkAvailability</span><span style="color:#202124;">: </span><span style="color:#0d22aa;font-style:italic;">ƒ </span><span style="color:#303942;font-style:italic;">checkAvailability(e,t,i)</span></div>
<svg class="r" style="left:578px;top:635px;" width="6.4" height="8" viewBox="0 0 6.4 8"><path d="M0 0L6.4 4.0L0 8Z" fill="#5f6368"/></svg>
<div class="t" style="left:588px;top:633px;font-family:'Liberation Mono', monospace;font-size:12.4px;color:#202124;font-weight:normal;font-style:normal;"><span style="color:#b269b6;-webkit-text-stroke:0.2px currentColor;">clearAllLocalSettings</span><span style="color:#202124;">: </span><span style="color:#0d22aa;font-style:italic;">ƒ </span><span style="color:#303942;font-style:italic;">clearAllLocalSettings(e)</span></div>
<svg class="r" style="left:578px;top:653px;" width="6.4" height="8" viewBox="0 0 6.4 8"><path d="M0 0L6.4 4.0L0 8Z" fill="#5f6368"/></svg>
<div class="t" style="left:588px;top:651px;font-family:'Liberation Mono', monospace;font-size:12.4px;color:#202124;font-weight:normal;font-style:normal;"><span style="color:#b269b6;-webkit-text-stroke:0.2px currentColor;">close</span><span style="color:#202124;">: </span><span style="color:#0d22aa;font-style:italic;">ƒ </span><span style="color:#303942;font-style:italic;">close()</span></div>
<svg class="r" style="left:578px;top:671px;" width="6.4" height="8" viewBox="0 0 6.4 8"><path d="M0 0L6.4 4.0L0 8Z" fill="#5f6368"/></svg>
<div class="t" style="left:588px;top:669px;font-family:'Liberation Mono', monospace;font-size:12.4px;color:#202124;font-weight:normal;font-style:normal;"><span style="color:#b269b6;-webkit-text-stroke:0.2px currentColor;">commLogLevel</span><span style="color:#202124;">: </span><span style="color:#0d22aa;font-style:italic;">ƒ </span><span style="color:#303942;font-style:italic;">commLogLevel()</span></div>
<svg class="r" style="left:578px;top:689px;" width="6.4" height="8" viewBox="0 0 6.4 8"><path d="M0 0L6.4 4.0L0 8Z" fill="#5f6368"/></svg>
<div class="t" style="left:588px;top:687px;font-family:'Liberation Mono', monospace;font-size:12.4px;color:#202124;font-weight:normal;font-style:normal;"><span style="color:#b269b6;-webkit-text-stroke:0.2px currentColor;">constructor</span><span style="color:#202124;">: </span><span style="color:#0d22aa;font-style:italic;">class </span><span style="color:#303942;font-style:italic;">ve</span></div>
<div class="t" style="left:588px;top:705px;font-family:'Liberation Mono', monospace;font-size:12.4px;color:#202124;font-weight:normal;font-style:normal;"><span style="color:#b269b6;-webkit-text-stroke:0.2px currentColor;">container</span><span style="color:#202124;">: (...)</span></div>
<svg class="r" style="left:578px;top:725px;" width="6.4" height="8" viewBox="0 0 6.4 8"><path d="M0 0L6.4 4.0L0 8Z" fill="#5f6368"/></svg>
<div class="t" style="left:588px;top:723px;font-family:'Liberation Mono', monospace;font-size:12.4px;color:#202124;font-weight:normal;font-style:normal;"><span style="color:#b269b6;-webkit-text-stroke:0.2px currentColor;">currentLanguage</span><span style="color:#202124;">: </span><span style="color:#0d22aa;font-style:italic;">ƒ </span><span style="color:#303942;font-style:italic;">currentLanguage()</span></div>
<svg class="r" style="left:578px;top:743px;" width="6.4" height="8" viewBox="0 0 6.4 8"><path d="M0 0L6.4 4.0L0 8Z" fill="#5f6368"/></svg>
<div class="t" style="left:588px;top:741px;font-family:'Liberation Mono', monospace;font-size:12.4px;color:#202124;font-weight:normal;font-style:normal;"><span style="color:#b269b6;-webkit-text-stroke:0.2px currentColor;">currentSelection</span><span style="color:#202124;">: </span><span style="color:#0d22aa;font-style:italic;">ƒ </span><span style="color:#303942;font-style:italic;">currentSelection()</span></div>
<svg class="r" style="left:578px;top:761px;" width="6.4" height="8" viewBox="0 0 6.4 8"><path d="M0 0L6.4 4.0L0 8Z" fill="#5f6368"/></svg>
<div class="t" style="left:588px;top:759px;font-family:'Liberation Mono', monospace;font-size:12.4px;color:#202124;font-weight:normal;font-style:normal;"><span style="color:#b269b6;-webkit-text-stroke:0.2px currentColor;">debugMsg</span><span style="color:#202124;">: </span><span style="color:#0d22aa;font-style:italic;">ƒ </span><span style="color:#303942;font-style:italic;">debugMsg(e,t)</span></div>
<svg class="r" style="left:578px;top:779px;" width="6.4" height="8" viewBox="0 0 6.4 8"><path d="M0 0L6.4 4.0L0 8Z" fill="#5f6368"/></svg>
<div class="t" style="left:588px;top:777px;font-family:'Liberation Mono', monospace;font-size:12.4px;color:#202124;font-weight:normal;font-style:normal;"><span style="color:#b269b6;-webkit-text-stroke:0.2px currentColor;">densityFactor</span><span style="color:#202124;">: </span><span style="color:#0d22aa;font-style:italic;">ƒ </span><span style="color:#303942;font-style:italic;">densityFactor()</span></div>
<svg class="r" style="left:578px;top:797px;" width="6.4" height="8" viewBox="0 0 6.4 8"><path d="M0 0L6.4 4.0L0 8Z" fill="#5f6368"/></svg>
<div class="t" style="left:588px;top:795px;font-family:'Liberation Mono', monospace;font-size:12.4px;color:#202124;font-weight:normal;font-style:normal;"><span style="color:#b269b6;-webkit-text-stroke:0.2px currentColor;">doTests</span><span style="color:#202124;">: </span><span style="color:#0d22aa;font-style:italic;">ƒ </span><span style="color:#303942;font-style:italic;">doTests()</span></div>
<svg class="r" style="left:578px;top:815px;" width="6.4" height="8" viewBox="0 0 6.4 8"><path d="M0 0L6.4 4.0L0 8Z" fill="#5f6368"/></svg>
<div class="t" style="left:588px;top:813px;font-family:'Liberation Mono', monospace;font-size:12.4px;color:#202124;font-weight:normal;font-style:normal;"><span style="color:#b269b6;-webkit-text-stroke:0.2px currentColor;">elements</span><span style="color:#202124;">: </span><span style="color:#0d22aa;font-style:italic;">ƒ </span><span style="color:#303942;font-style:italic;">elements()</span></div>
<svg class="r" style="left:578px;top:833px;" width="6.4" height="8" viewBox="0 0 6.4 8"><path d="M0 0L6.4 4.0L0 8Z" fill="#5f6368"/></svg>
<div class="t" style="left:588px;top:831px;font-family:'Liberation Mono', monospace;font-size:12.4px;color:#202124;font-weight:normal;font-style:normal;"><span style="color:#b269b6;-webkit-text-stroke:0.2px currentColor;">enabled</span><span style="color:#202124;">: </span><span style="color:#0d22aa;font-style:italic;">ƒ </span><span style="color:#303942;font-style:italic;">enabled()</span></div>
<svg class="r" style="left:578px;top:851px;" width="6.4" height="8" viewBox="0 0 6.4 8"><path d="M0 0L6.4 4.0L0 8Z" fill="#5f6368"/></svg>
<div class="t" style="left:588px;top:849px;font-family:'Liberation Mono', monospace;font-size:12.4px;color:#202124;font-weight:normal;font-style:normal;"><span style="color:#b269b6;-webkit-text-stroke:0.2px currentColor;">executeManeuver</span><span style="color:#202124;">: </span><span style="color:#0d22aa;font-style:italic;">ƒ </span><span style="color:#303942;font-style:italic;">executeManeuver(e)</span></div>
<svg class="r" style="left:578px;top:869px;" width="6.4" height="8" viewBox="0 0 6.4 8"><path d="M0 0L6.4 4.0L0 8Z" fill="#5f6368"/></svg>
<div class="t" style="left:588px;top:867px;font-family:'Liberation Mono', monospace;font-size:12.4px;color:#202124;font-weight:normal;font-style:normal;"><span style="color:#b269b6;-webkit-text-stroke:0.2px currentColor;">expanded</span><span style="color:#202124;">: </span><span style="color:#0d22aa;font-style:italic;">ƒ </span><span style="color:#303942;font-style:italic;">expanded()</span></div>
<svg class="r" style="left:578px;top:887px;" width="6.4" height="8" viewBox="0 0 6.4 8"><path d="M0 0L6.4 4.0L0 8Z" fill="#5f6368"/></svg>
<div class="t" style="left:588px;top:885px;font-family:'Liberation Mono', monospace;font-size:12.4px;color:#202124;font-weight:normal;font-style:normal;"><span style="color:#b269b6;-webkit-text-stroke:0.2px currentColor;">format</span><span style="color:#202124;">: </span><span style="color:#0d22aa;font-style:italic;">ƒ </span><span style="color:#303942;font-style:italic;">format()</span></div>
<div class="t" style="left:588px;top:903px;font-family:'Liberation Mono', monospace;font-size:12.4px;color:#202124;font-weight:normal;font-style:normal;"><span style="color:#b269b6;-webkit-text-stroke:0.2px currentColor;">gestures</span><span style="color:#202124;">: (...)</span></div>
<svg class="r" style="left:578px;top:923px;" width="6.4" height="8" viewBox="0 0 6.4 8"><path d="M0 0L6.4 4.0L0 8Z" fill="#5f6368"/></svg>
<div class="t" style="left:588px;top:921px;font-family:'Liberation Mono', monospace;font-size:12.4px;color:#202124;font-weight:normal;font-style:normal;"><span style="color:#b269b6;-webkit-text-stroke:0.2px currentColor;">getLocalSettings</span><span style="color:#202124;">: </span><span style="color:#0d22aa;font-style:italic;">ƒ </span><span style="color:#303942;font-style:italic;">getLocalSettings(e)</span></div>
<svg class="r" style="left:578px;top:940px;" width="6.4" height="8" viewBox="0 0 6.4 8"><path d="M0 0L6.4 4.0L0 8Z" fill="#5f6368"/></svg>
<div class="t" style="left:588px;top:938px;font-family:'Liberation Mono', monospace;font-size:12.4px;color:#202124;font-weight:normal;font-style:normal;"><span style="color:#b269b6;-webkit-text-stroke:0.2px currentColor;">height</span><span style="color:#202124;">: </span><span style="color:#0d22aa;font-style:italic;">ƒ </span><span style="color:#303942;font-style:italic;">height()</span></div>
</body></html>
